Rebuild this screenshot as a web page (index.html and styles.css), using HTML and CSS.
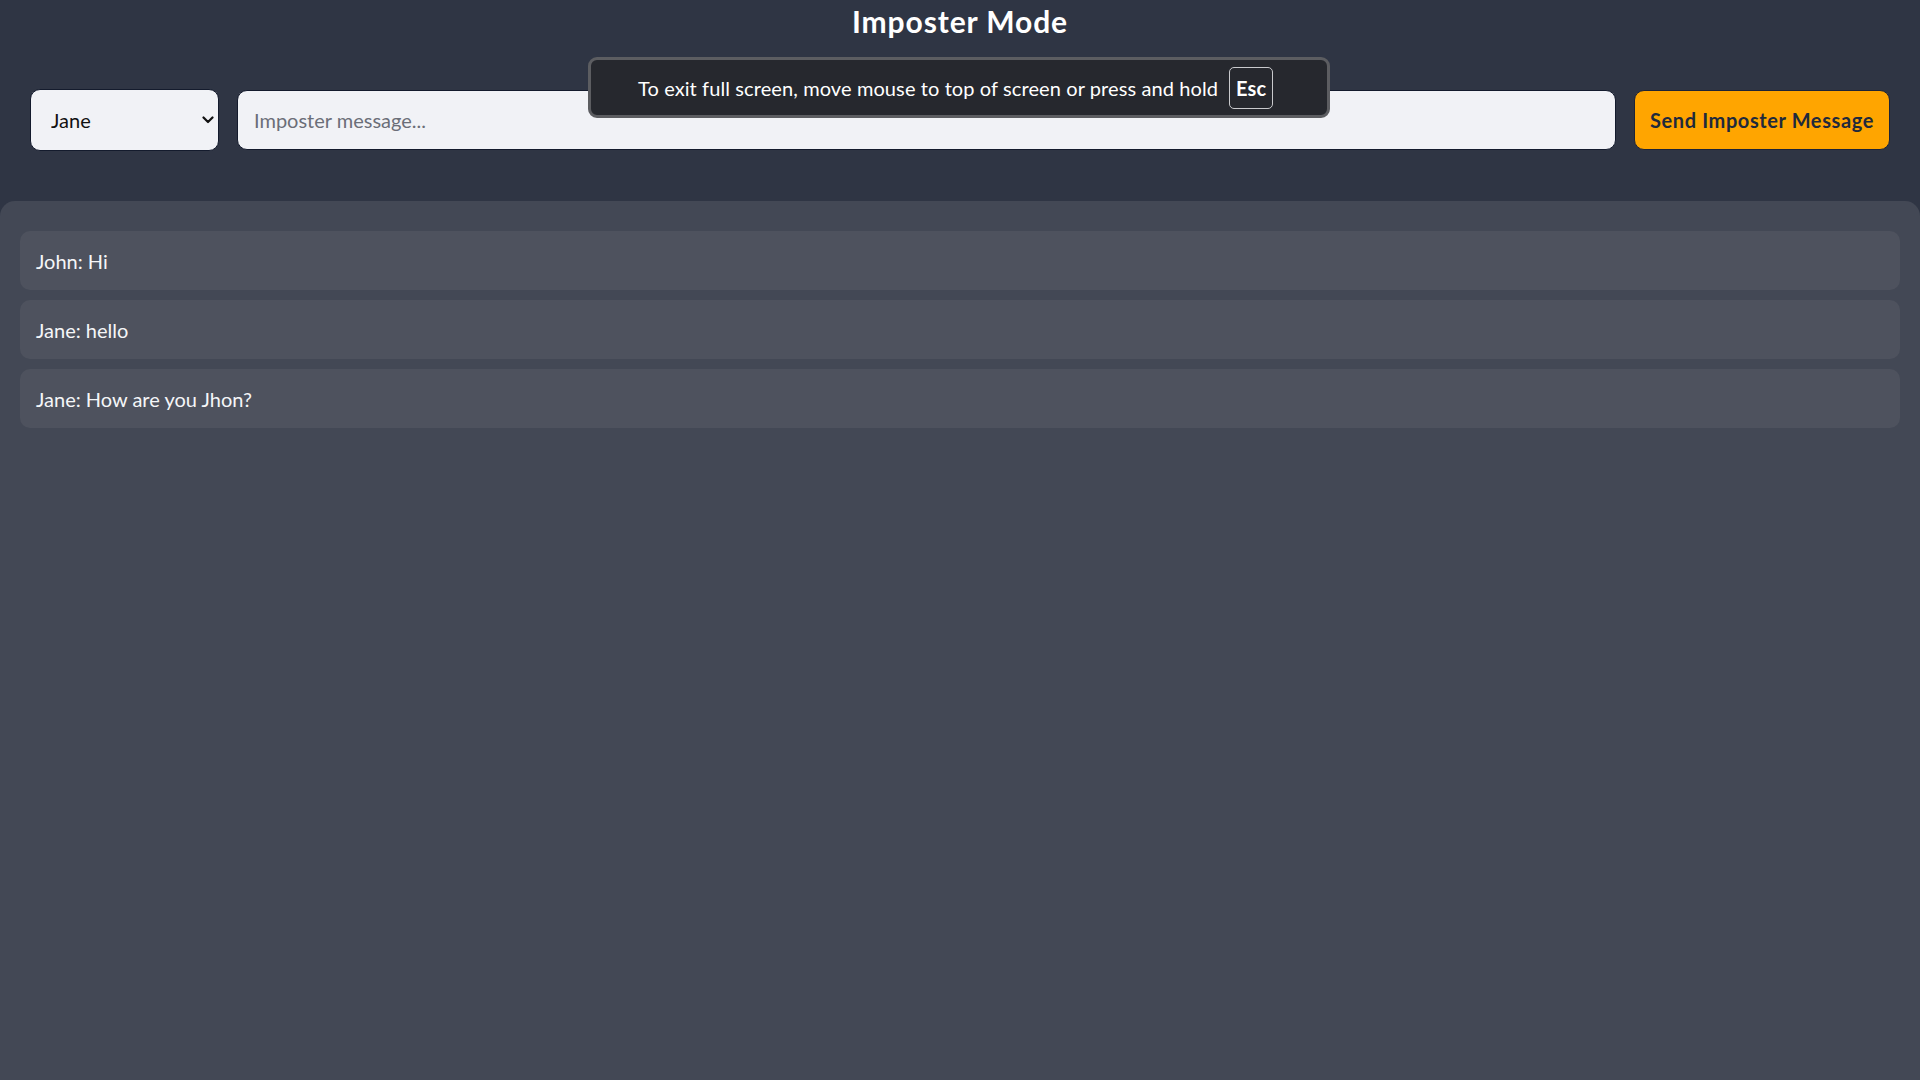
FILE: index.html
```html
<!DOCTYPE html>
<html lang="en">
<head>
<meta charset="utf-8">
<title>Imposter Mode</title>
<link rel="stylesheet" href="styles.css">
</head>
<body>
<div class="page">
  <header class="top">
    <h1 class="title">Imposter Mode</h1>
    <div class="controls">
      <div class="select-wrap">
        <select class="who">
          <option>Jane</option>
          <option>John</option>
        </select>
        <svg class="chevron" width="12" height="8" viewBox="0 0 12 8"><path d="M1.5 1.5 L6 6 L10.5 1.5" fill="none" stroke="#111" stroke-width="2.2" stroke-linecap="round" stroke-linejoin="round"/></svg>
      </div>
      <input class="msg" type="text" placeholder="Imposter message...">
      <button class="send">Send Imposter Message</button>
    </div>
  </header>
  <main class="panel">
    <div class="row">John: Hi</div>
    <div class="row">Jane: hello</div>
    <div class="row">Jane: How are you Jhon?</div>
  </main>
</div>
<div class="fs-notice">
  <span class="fs-text">To exit full screen, move mouse to top of screen or press and hold</span>
  <span class="fs-key">Esc</span>
</div>
</body>
</html>
```
FILE: styles.css
```css
* { box-sizing: border-box; }
html, body { margin: 0; padding: 0; }
body {
  background: #2f3544;
  font-family: Lato, "Noto Sans", sans-serif;
  color: #ffffff;
  height: 1080px;
  overflow: hidden;
}
.page {
  display: flex;
  flex-direction: column;
  height: 1080px;
}
.top {
  padding: 0 30px 50px;
}
.title {
  margin: 0;
  text-align: center;
  font-size: 30px;
  line-height: 42px;
  font-weight: 700;
  letter-spacing: 0.9px;
  color: #ffffff;
}
.controls {
  margin-top: 47px;
  display: flex;
  align-items: center;
  gap: 18px;
}
.select-wrap {
  position: relative;
  width: 189px;
  height: 62px;
  flex: none;
}
.who {
  appearance: none;
  -webkit-appearance: none;
  width: 100%;
  height: 100%;
  border: 1px solid #141b2d;
  border-radius: 10px;
  background: #f1f2f6;
  padding: 0 20px;
  font-family: inherit;
  font-size: 20px;
  color: #111111;
  outline: none;
}
.chevron {
  position: absolute;
  right: 5px;
  top: 27px;
  pointer-events: none;
}
.msg {
  flex: 1;
  height: 60px;
  border: 1px solid #141b2d;
  border-radius: 10px;
  background: #f1f2f6;
  padding: 0 16px;
  font-family: inherit;
  font-size: 20px;
  color: #111;
  outline: none;
}
.msg::placeholder { color: #6b6e78; }
.send {
  flex: none;
  width: 256px;
  height: 60px;
  border: 1px solid #1d2438;
  border-radius: 10px;
  background: #ffa500;
  color: #1f2a3c;
  font-family: inherit;
  font-size: 20px;
  font-weight: 700;
  letter-spacing: 0.6px;
  padding: 0 12px;
  white-space: nowrap;
}
.panel {
  flex: 1;
  background: #434855;
  border-radius: 15px 15px 0 0;
  padding: 30px 20px;
  display: flex;
  flex-direction: column;
  gap: 10px;
}
.row {
  background: #4e525e;
  border-radius: 10px;
  height: 59px;
  padding: 0 16px;
  display: flex;
  align-items: center;
  font-size: 20px;
  color: #f5f6f8;
}
.fs-notice {
  position: absolute;
  left: 588px;
  top: 57px;
  width: 742px;
  height: 61px;
  background: #26282e;
  border: 3px solid #5c5d61;
  border-radius: 9px;
  display: flex;
  align-items: center;
  padding: 0 0 0 47px;
  gap: 11px;
  font-size: 20px;
  letter-spacing: 0.1px;
  color: #ffffff;
}
.fs-key {
  display: flex;
  align-items: center;
  justify-content: center;
  width: 44px;
  height: 42px;
  border: 1px solid #c9cacd;
  border-radius: 5px;
  font-weight: 700;
}
```
